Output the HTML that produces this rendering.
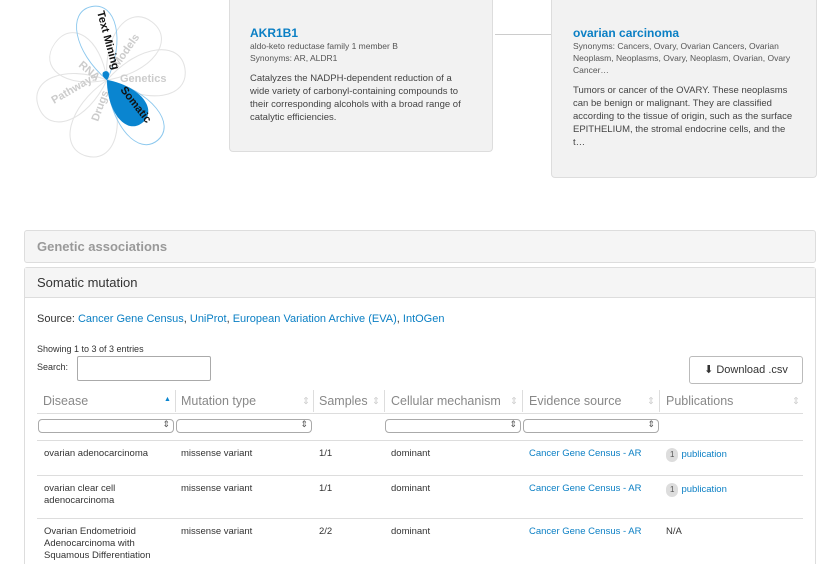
<!DOCTYPE html>
<html><head><style>
html,body{margin:0;width:840px;height:564px;overflow:hidden;background:#fff;font-family:"Liberation Sans",sans-serif;position:relative;color:#333}
.abs{position:absolute}
.card{position:absolute;box-sizing:border-box;background:#f2f2f2;border:1px solid #ddd;border-radius:0 0 4px 4px;border-top:none}
.card h3{margin:0;color:#0a7fc4;font-size:12px;font-weight:bold}
.small{font-size:8.5px;color:#555;line-height:12px}
.desc{font-size:9.5px;color:#444;line-height:13px;margin-top:8px}
a{color:#0a7fc4;text-decoration:none}
.th{position:absolute;top:394px;font-size:12.5px;color:#888}
.sel{position:absolute;top:419px;height:12px;border:1px solid #aaa;border-radius:4px;background:#fff}
.sel:after{content:"⇕";position:absolute;right:3px;top:-1px;font-size:9px;color:#555}
.td{position:absolute;font-size:9.5px;color:#333;line-height:12px}
.hr{position:absolute;left:37px;width:766px;height:1px;background:#ddd}
.vs{position:absolute;top:390px;width:1px;height:22px;background:#ddd}
.badge{display:inline-block;background:#ddd;border-radius:7px;font-size:8px;padding:1px 4px;color:#555;margin-right:3px}
</style></head><body>
<svg class="abs" style="left:20px;top:0" width="200" height="170" viewBox="0 0 200 170">
<defs><path id="p" d="M0 0 C-30 -35 -28 -75 0 -75 C28 -75 30 -35 0 0Z"/></defs>
<g fill="none" stroke="#e3e3e3" stroke-width="1" transform="translate(87 80)">
<use href="#p" transform="rotate(38) scale(1.05 0.98)"/>
<use href="#p" transform="rotate(82) scale(1.05 1.05)"/>
<use href="#p" transform="rotate(195) scale(1.05 1.05)"/>
<use href="#p" transform="rotate(248) scale(1.05 0.98)"/>
<use href="#p" transform="rotate(305) scale(1.05 0.85)"/>
</g>
<g transform="translate(87 80)">
<use href="#p" transform="rotate(-12) scale(0.9 1.0)" fill="none" stroke="#8cc8ee"/>
<use href="#p" transform="rotate(140) scale(0.9 1.05)" fill="none" stroke="#8cc8ee"/>
<use href="#p" transform="rotate(140) scale(0.72 0.74)" fill="#0a85d0"/>
<use href="#p" transform="rotate(-12) scale(0.15 0.12)" fill="#0a85d0"/>
</g>
<g font-family="Liberation Sans" font-size="11" font-weight="bold" fill="#ccc">
<text x="98" y="68" transform="rotate(-55 98 68)">Models</text>
<text x="100" y="82">Genetics</text>
<text x="58" y="66" transform="rotate(40 58 66)">RNA</text>
<text x="34" y="104" transform="rotate(-30 34 104)">Pathways</text>
<text x="78" y="122" transform="rotate(-70 78 122)">Drugs</text>
</g>
<text x="77" y="12" transform="rotate(75 77 12)" font-family="Liberation Sans" font-size="11" font-weight="bold" fill="#111">Text Mining</text>
<text x="100" y="90" transform="rotate(52 100 90)" font-family="Liberation Sans" font-size="11" font-weight="bold" fill="#111">Somatic</text>
</svg>
<div class="card" style="left:229px;top:0;width:264px;height:152px;padding:26px 24px 0 20px">
<h3>AKR1B1</h3><div class="small">aldo-keto reductase family 1 member B<br>Synonyms: AR, ALDR1</div>
<div class="desc">Catalyzes the NADPH-dependent reduction of a wide variety of carbonyl-containing compounds to their corresponding alcohols with a broad range of catalytic efficiencies.</div></div>
<div class="abs" style="left:495px;top:34px;width:56px;height:1px;background:#ccc"></div>
<div class="card" style="left:551px;top:0;width:266px;height:178px;padding:26px 20px 0 21px">
<h3>ovarian carcinoma</h3><div class="small">Synonyms: Cancers, Ovary, Ovarian Cancers, Ovarian Neoplasm, Neoplasms, Ovary, Neoplasm, Ovarian, Ovary Cancer…</div>
<div class="desc">Tumors or cancer of the OVARY. These neoplasms can be benign or malignant. They are classified according to the tissue of origin, such as the surface EPITHELIUM, the stromal endocrine cells, and the t…</div></div>
<div class="abs" style="left:24px;top:230px;width:790px;height:31px;background:#f5f5f5;border:1px solid #ddd;border-radius:3px"><div style="padding:8px 12px;font-size:13px;font-weight:bold;color:#999">Genetic associations</div></div>
<div class="abs" style="left:24px;top:267px;width:790px;height:310px;border:1px solid #ddd;border-radius:3px">
<div style="height:30px;background:#f5f5f5;border-bottom:1px solid #ddd;padding:7px 12px;box-sizing:border-box;font-size:13px;color:#333">Somatic mutation</div></div>
<div class="abs" style="left:37px;top:313px;font-size:11px">Source: <a>Cancer Gene Census</a>, <a>UniProt</a>, <a>European Variation Archive (EVA)</a>, <a>IntOGen</a></div>
<div class="abs" style="left:37px;top:344px;font-size:9px">Showing 1 to 3 of 3 entries</div>
<div class="abs" style="left:37px;top:362px;font-size:9px">Search:</div>
<div class="abs" style="left:77px;top:356px;width:132px;height:23px;border:1px solid #aaa;border-radius:2px"></div>
<div class="abs" style="left:689px;top:356px;width:112px;height:26px;border:1px solid #bbb;border-radius:3px;font-size:11px;line-height:26px;text-align:center">⬇ Download .csv</div>
<div class="th" style="left:43px">Disease</div><div class="abs" style="left:164px;top:396px;font-size:7px;color:#0a85d0">▲</div>
<div class="th" style="left:181px">Mutation type</div>
<div class="th" style="left:319px">Samples</div>
<div class="th" style="left:391px">Cellular mechanism</div>
<div class="th" style="left:529px">Evidence source</div>
<div class="th" style="left:666px">Publications</div>
<div class="td" style="left:302px;top:396px;color:#ccc">⇕</div><div class="td" style="left:372px;top:396px;color:#ccc">⇕</div><div class="td" style="left:510px;top:396px;color:#ccc">⇕</div><div class="td" style="left:647px;top:396px;color:#ccc">⇕</div><div class="td" style="left:792px;top:396px;color:#ccc">⇕</div>
<div class="vs" style="left:175px"></div><div class="vs" style="left:313px"></div><div class="vs" style="left:384px"></div><div class="vs" style="left:522px"></div><div class="vs" style="left:659px"></div>
<div class="hr" style="top:413px"></div>
<div class="sel" style="left:38px;width:134px"></div><div class="sel" style="left:176px;width:134px"></div><div class="sel" style="left:385px;width:134px"></div><div class="sel" style="left:523px;width:134px"></div>
<div class="hr" style="top:440px"></div>
<div class="td" style="left:44px;top:448px">ovarian adenocarcinoma</div><div class="td" style="left:181px;top:448px">missense variant</div><div class="td" style="left:319px;top:448px">1/1</div><div class="td" style="left:391px;top:448px">dominant</div><div class="td" style="left:529px;top:448px"><a>Cancer Gene Census - AR</a></div><div class="td" style="left:666px;top:448px"><span class="badge">1</span><a>publication</a></div>
<div class="hr" style="top:475px"></div>
<div class="td" style="left:44px;top:483px">ovarian clear cell<br>adenocarcinoma</div><div class="td" style="left:181px;top:483px">missense variant</div><div class="td" style="left:319px;top:483px">1/1</div><div class="td" style="left:391px;top:483px">dominant</div><div class="td" style="left:529px;top:483px"><a>Cancer Gene Census - AR</a></div><div class="td" style="left:666px;top:483px"><span class="badge">1</span><a>publication</a></div>
<div class="hr" style="top:518px"></div>
<div class="td" style="left:44px;top:526px">Ovarian Endometrioid<br>Adenocarcinoma with<br>Squamous Differentiation</div><div class="td" style="left:181px;top:526px">missense variant</div><div class="td" style="left:319px;top:526px">2/2</div><div class="td" style="left:391px;top:526px">dominant</div><div class="td" style="left:529px;top:526px"><a>Cancer Gene Census - AR</a></div><div class="td" style="left:666px;top:526px">N/A</div>
</body></html>
